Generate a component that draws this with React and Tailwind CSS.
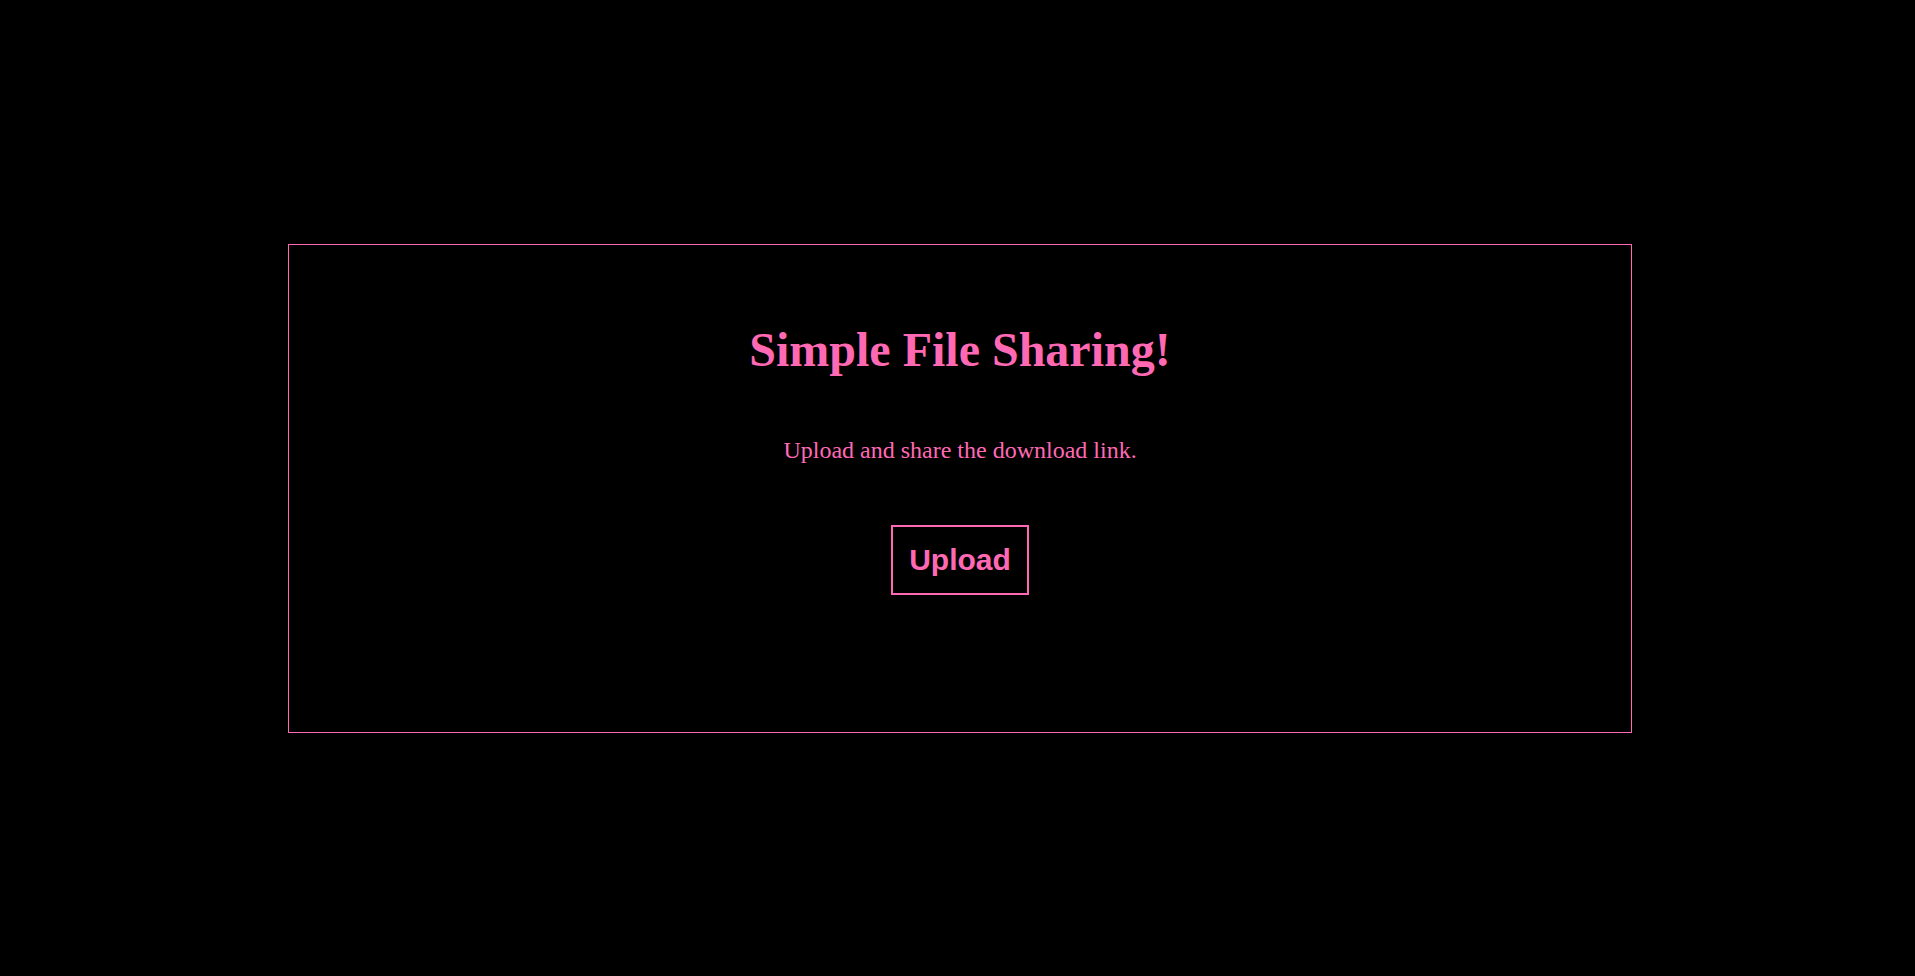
export default function App() {
  return (
    <div className="h-[976px] w-full bg-black flex items-center pl-[288px]">
      <div className="w-[1344px] h-[489px] border border-[#ff69b4] flex flex-col items-center pt-[77px]">
        <h1 className="font-['Liberation_Serif','Times_New_Roman',serif] text-[48px] font-bold text-[#ff69b4] leading-[55px]">
          Simple File Sharing!
        </h1>
        <p className="mt-[59px] font-['Liberation_Serif','Times_New_Roman',serif] text-[24px] text-[#ff69b4] leading-[28px]">
          Upload and share the download link.
        </p>
        <button className="mt-[61px] border-2 border-[#ff69b4] px-4 py-4 font-['Liberation_Sans',Arial,sans-serif] text-[30px] leading-[34px] font-bold text-[#ff69b4] bg-black">
          Upload
        </button>
      </div>
    </div>
  );
}
